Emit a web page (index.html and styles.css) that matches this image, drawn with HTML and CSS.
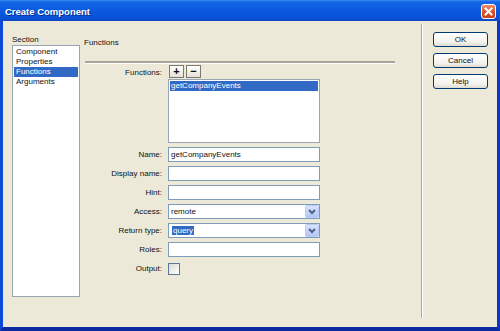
FILE: index.html
```html
<!DOCTYPE html>
<html lang="en">
<head>
  <meta charset="UTF-8">
  <title>Create Component</title>
  <link rel="stylesheet" href="styles.css">
</head>
<body>
  <div class="window">
    <div class="titlebar">
      <span class="title">Create Component</span>
      <span class="close">
        <svg width="13" height="13" viewBox="0 0 13 13">
          <path d="M3.5 3.5 L9.5 9.5 M9.5 3.5 L3.5 9.5" stroke="#fff" stroke-width="2" stroke-linecap="square"/>
        </svg>
      </span>
    </div>

    <div class="frame">
      <div class="sidebar">
        <div class="caption">Section</div>
        <ul class="listbox section-list">
          <li>Component</li>
          <li>Properties</li>
          <li class="selected">Functions</li>
          <li>Arguments</li>
        </ul>
      </div>

      <div class="main">
        <div class="heading">Functions</div>
        <div class="rule"></div>

        <div class="form">
          <label class="lbl lbl-top">Functions:</label>
          <div class="fn-box">
            <div class="fn-tools">
              <span class="tool">+</span>
              <span class="tool">&minus;</span>
            </div>
            <ul class="listbox fn-list">
              <li class="selected">getCompanyEvents</li>
            </ul>
          </div>

          <label class="lbl">Name:</label>
          <div class="field">getCompanyEvents</div>

          <label class="lbl">Display name:</label>
          <div class="field"></div>

          <label class="lbl">Hint:</label>
          <div class="field"></div>

          <label class="lbl">Access:</label>
          <div class="field select">
            <span class="value">remote</span>
            <span class="arrow">
              <svg width="14" height="13" viewBox="0 0 14 13">
                <defs>
                  <linearGradient id="ag1" x1="0" y1="0" x2="0" y2="1">
                    <stop offset="0" stop-color="#dbe5fd"/>
                    <stop offset="1" stop-color="#b0c5f6"/>
                  </linearGradient>
                </defs>
                <rect x="0.5" y="0.5" width="13" height="12" rx="1" fill="url(#ag1)" stroke="#b8cbf6"/>
                <path d="M4 5 L7 8 L10 5" fill="none" stroke="#4d6185" stroke-width="2"/>
              </svg>
            </span>
          </div>

          <label class="lbl">Return type:</label>
          <div class="field select">
            <span class="value"><span class="hl">query</span></span>
            <span class="arrow">
              <svg width="14" height="13" viewBox="0 0 14 13">
                <defs>
                  <linearGradient id="ag2" x1="0" y1="0" x2="0" y2="1">
                    <stop offset="0" stop-color="#dbe5fd"/>
                    <stop offset="1" stop-color="#b0c5f6"/>
                  </linearGradient>
                </defs>
                <rect x="0.5" y="0.5" width="13" height="12" rx="1" fill="url(#ag2)" stroke="#b8cbf6"/>
                <path d="M4 5 L7 8 L10 5" fill="none" stroke="#4d6185" stroke-width="2"/>
              </svg>
            </span>
          </div>

          <label class="lbl">Roles:</label>
          <div class="field"></div>

          <label class="lbl">Output:</label>
          <div class="check-cell"><span class="checkbox"></span></div>
        </div>
      </div>

      <div class="divider"></div>

      <div class="buttons">
        <span class="btn">OK</span>
        <span class="btn">Cancel</span>
        <span class="btn">Help</span>
      </div>
    </div>
  </div>
</body>
</html>
```

FILE: styles.css
```css
body {
  margin: 0;
  font-family: "Liberation Sans", Arial, sans-serif;
  font-size: 8px;
  color: #111;
  overflow: hidden;
}
.window {
  width: 500px;
  height: 331px;
  display: flex;
  flex-direction: column;
}
.titlebar {
  height: 21px;
  display: flex;
  align-items: center;
  justify-content: space-between;
  background: linear-gradient(to bottom, #3d8cf2 0, #1565e6 2px, #0a5ae0 50%, #0852d6 85%, #0a46c4 100%);
}
.title {
  padding-left: 5px;
  padding-top: 1px;
  color: #fff;
  font-weight: bold;
  font-size: 9.5px;
  text-shadow: 1px 1px 0 #0a2c8c;
}
.close {
  width: 15px;
  height: 15px;
  box-sizing: border-box;
  margin-right: 4px;
  margin-top: 1px;
  border: 1px solid #fff;
  border-radius: 3px;
  background: linear-gradient(to bottom, #ec8b68, #d94b22 60%, #c8401c);
  display: flex;
  align-items: center;
  justify-content: center;
}
.frame {
  flex: 1;
  display: flex;
  background: #ece9d8;
  border-left: 3px solid #0b49d8;
  border-right: 3px solid #0838c4;
  border-bottom: 4px solid #0a2a9e;
  padding: 3px 0 9px;
}
.sidebar {
  width: 68px;
  margin: 11px 0 21px 9px;
  display: flex;
  flex-direction: column;
}
.caption {
  line-height: 10px;
}
ul.listbox {
  list-style: none;
  margin: 0;
  padding: 1px;
  background: #fff;
  border: 1px solid #98a5b3;
}
.listbox li {
  line-height: 10px;
  padding-left: 2px;
}
.listbox li.selected {
  background: #316ac5;
  color: #fff;
}
.section-list {
  margin-top: 4px;
  flex: 1;
}
.main {
  width: 312px;
  margin: 14px 0 0 4px;
}
.heading {
  line-height: 10px;
  margin-bottom: 13px;
}
.rule {
  width: 310px;
  margin-left: 1px;
  border-top: 2px solid #a9a698;
  border-bottom: 1px solid #fff;
}
.form {
  margin-top: 1px;
  display: grid;
  grid-template-columns: 78px 152px;
  column-gap: 6px;
  row-gap: 4px;
}
.lbl {
  text-align: right;
  line-height: 15px;
}
.fn-tools {
  display: flex;
  gap: 2px;
  margin-left: 1px;
  margin-bottom: 1px;
}
.tool {
  width: 15px;
  height: 13px;
  box-sizing: border-box;
  border: 1px solid #7a7a70;
  background: linear-gradient(to bottom, #ffffff, #e4e2d6);
  font-weight: bold;
  font-size: 11px;
  line-height: 10px;
  text-align: center;
}
.fn-list {
  height: 64px;
  box-sizing: border-box;
}
.fn-list li {
  padding-left: 1px;
}
.field {
  height: 15px;
  box-sizing: border-box;
  border: 1px solid #7f9db9;
  background: #fff;
  padding: 0 2px;
  line-height: 13px;
}
.select {
  display: flex;
  padding-right: 0;
}
.value {
  flex: 1;
}
.hl {
  background: #316ac5;
  color: #fff;
  padding: 0 1px;
  margin-left: 1px;
}
.arrow {
  width: 14px;
  height: 13px;
}
.check-cell {
  height: 15px;
}
.checkbox {
  display: block;
  width: 12px;
  height: 12px;
  box-sizing: border-box;
  margin-top: 2px;
  border: 1px solid #5a7898;
  background: linear-gradient(to bottom right, #dcdbd3, #ffffff);
}
.divider {
  width: 0;
  margin-left: 25px;
  border-left: 1px solid #aca899;
  border-right: 1px solid #fff;
}
.buttons {
  width: 55px;
  margin: 8px 0 0 10px;
  display: flex;
  flex-direction: column;
  gap: 6px;
}
.btn {
  height: 15px;
  box-sizing: border-box;
  border: 1px solid #003c74;
  border-radius: 3px;
  background: linear-gradient(to bottom, #ffffff, #f3f2ec 70%, #dedbcf);
  text-align: center;
  line-height: 13px;
}
```
